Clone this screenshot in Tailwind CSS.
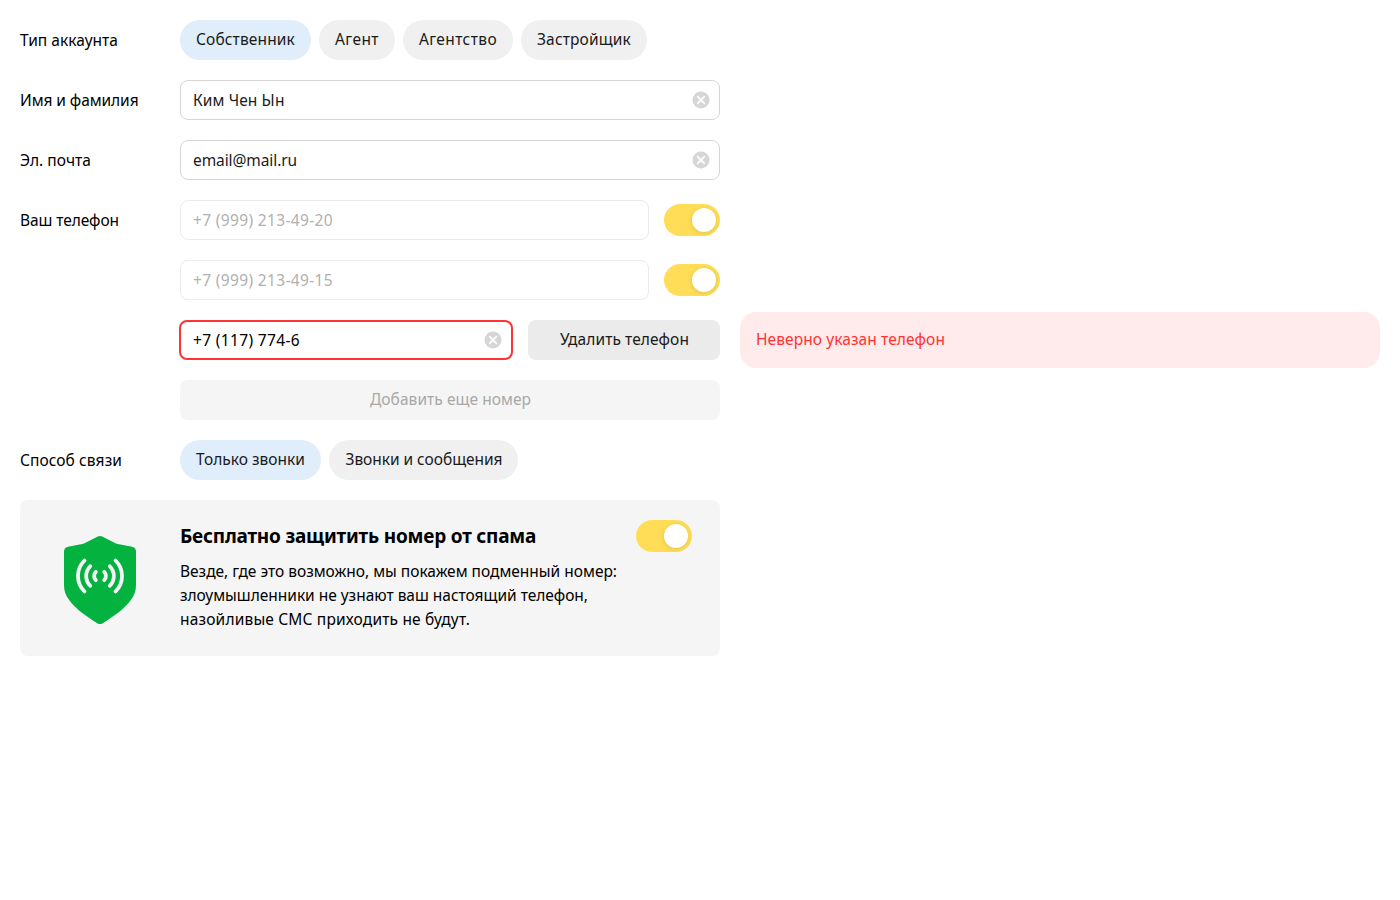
<!DOCTYPE html>
<html lang="ru">
<head>
<meta charset="utf-8">
<title>Контакты</title>
<script src="https://cdn.jsdelivr.net/npm/@tailwindcss/browser@4"></script>
</head>
<body class="bg-white text-black font-['Noto_Sans',sans-serif] text-[15.5px] leading-10 whitespace-nowrap">
<svg class="hidden">
  <symbol id="clear" viewBox="0 0 18 18">
    <circle cx="9" cy="9" r="8.5" fill="#d6d6d6"/>
    <path d="M5.7 5.7l6.6 6.6M12.3 5.700l-6.6 6.6" stroke="#fff" stroke-width="1.7" stroke-linecap="round"/>
  </symbol>
</svg>
<main class="p-5 flex flex-col gap-5">
  <div class="flex">
    <div class="w-40 tracking-[0.028px]">Тип аккаунта</div>
    <div class="flex gap-2 text-[#1a1a1a] leading-[38px]">
      <button class="h-10 w-[131px] pb-0.5 rounded-full bg-[#e0edfb] tracking-[0.145px]">Собственник</button>
      <button class="h-10 w-[76px] pb-0.5 rounded-full bg-[#f0f0f0] tracking-[0.442px]">Агент</button>
      <button class="h-10 w-[110px] pb-0.5 rounded-full bg-[#f0f0f0] tracking-[0.397px]">Агентство</button>
      <button class="h-10 w-[126px] pb-0.5 rounded-full bg-[#f0f0f0] tracking-[0.157px]">Застройщик</button>
    </div>
  </div>

  <div class="flex">
    <div class="w-40 tracking-[-0.076px]">Имя и фамилия</div>
    <div class="w-[540px] h-10 border border-[#d5d5d5] rounded-lg pl-3 pr-[9px] flex items-center justify-between text-[#1a1a1a]">
      <span class="tracking-[0.106px]">Ким Чен Ын</span>
      <svg class="size-[18px]"><use href="#clear"/></svg>
    </div>
  </div>

  <div class="flex">
    <div class="w-40 tracking-[0.049px]">Эл. почта</div>
    <div class="w-[540px] h-10 border border-[#d5d5d5] rounded-lg pl-3 pr-[9px] flex items-center justify-between text-[#1a1a1a]">
      <span class="tracking-[-0.091px]">email@mail.ru</span>
      <svg class="size-[18px]"><use href="#clear"/></svg>
    </div>
  </div>

  <div class="flex">
    <div class="w-40 tracking-[-0.087px]">Ваш телефон</div>
    <div class="w-[540px] flex items-center justify-between">
      <div class="w-[469px] h-10 border border-[#ebebeb] rounded-lg px-3 flex items-center text-[#b0b0b0] tracking-[0.348px]">+7 (999) 213-49-20</div>
      <div class="w-14 h-8 p-1 rounded-full bg-[#ffdd57] flex justify-end"><div class="size-6 rounded-full bg-white shadow-[0_1px_5px_rgba(0,0,0,0.12)]"></div></div>
    </div>
  </div>

  <div class="flex pl-40">
    <div class="w-[540px] flex items-center justify-between">
      <div class="w-[469px] h-10 border border-[#ebebeb] rounded-lg px-3 flex items-center text-[#b0b0b0] tracking-[0.348px]">+7 (999) 213-49-15</div>
      <div class="w-14 h-8 p-1 rounded-full bg-[#ffdd57] flex justify-end"><div class="size-6 rounded-full bg-white shadow-[0_1px_5px_rgba(0,0,0,0.12)]"></div></div>
    </div>
  </div>

  <div class="flex pl-40 h-10 items-center">
    <div class="w-[334px] -ml-px h-10 border-2 border-[#ff3333] rounded-lg pl-3 pr-[9px] flex items-center justify-between shrink-0">
      <span class="tracking-[0.347px]">+7 (117) 774-6</span>
      <svg class="size-[18px]"><use href="#clear"/></svg>
    </div>
    <button class="ml-[15px] w-48 h-10 pb-0.5 pl-px leading-[38px] rounded-lg bg-[#ebebeb] text-[#1a1a1a] tracking-[0.079px] shrink-0">Удалить телефон</button>
    <div class="ml-5 flex-1 h-14 pb-0.5 px-4 rounded-2xl bg-[#ffebeb] text-[#ff3333] flex items-center tracking-[0.088px]">Неверно указан телефон</div>
  </div>

  <div class="flex pl-40">
    <button class="w-[540px] h-10 pb-0.5 pl-px leading-[38px] rounded-lg bg-[#f5f5f5] text-[#a8a8a8] tracking-[0.053px]">Добавить еще номер</button>
  </div>

  <div class="flex">
    <div class="w-40 tracking-[0.082px]">Способ связи</div>
    <div class="flex gap-2 text-[#1a1a1a] leading-[38px]">
      <button class="h-10 w-[141px] pb-0.5 rounded-full bg-[#e0edfb] tracking-[0.016px]">Только звонки</button>
      <button class="h-10 w-[189px] pb-0.5 pl-px rounded-full bg-[#f0f0f0] tracking-[-0.035px]">Звонки и сообщения</button>
    </div>
  </div>

  <section class="w-[700px] h-[156px] rounded-lg bg-[#f5f5f5] flex pt-5 pr-7">
    <div class="w-40 pt-4 pl-11 shrink-0">
      <svg class="w-[72px] h-[88px]" viewBox="0 0 72 88" fill="none">
        <path fill="#04b33f" d="M33.8.6a5 5 0 0 1 4.4 0L51.5 7.2c.7.4 1.500.6 2.300.8l14.200 2.700a5 5 0 0 1 4 4.900V49c0 6-1.600 10.200-5.200 15C61 72.500 49 80.800 38.800 87.200a5 5 0 0 1-5.600 0C23 80.800 11 72.500 5.200 64 1.600 59.200 0 55 0 49V15.600a5 5 0 0 1 4-4.900L18.200 8c.8-.2 1.600-.4 2.300-.8z"/>
        <g stroke="#f5f5f5" stroke-width="3.8" stroke-linecap="round">
          <path d="M20.500 24.500C11.800 33 11.800 47 20.500 55.500M26.200 30.200c-5.400 5.600-5.400 14 0 19.600M31.800 35.800c-2.300 2.300-2.300 6.100 0 8.400"/>
          <path d="M51.500 24.500c8.700 8.500 8.700 22.500 0 31M45.800 30.200c5.400 5.600 5.400 14 0 19.600M40.200 35.800c2.300 2.300 2.300 6.100 0 8.400"/>
        </g>
      </svg>
    </div>
    <div class="flex-1">
      <div class="flex justify-between h-8">
        <h2 class="font-bold text-[19px] leading-8 tracking-[-0.21px]">Бесплатно защитить номер от спама</h2>
        <div class="w-14 h-8 p-1 rounded-full bg-[#ffdd57] flex justify-end"><div class="size-6 rounded-full bg-white shadow-[0_1px_5px_rgba(0,0,0,0.12)]"></div></div>
      </div>
      <p class="mt-[7px] leading-6"><span class="tracking-[-0.004px]">Везде, где это возможно, мы покажем подменный номер:</span><br><span class="tracking-[-0.02px]">злоумышленники не узнают ваш настоящий телефон,</span><br><span class="tracking-[0.173px]">назойливые СМС приходить не будут.</span></p>
    </div>
  </section>
</main>
</body>
</html>
